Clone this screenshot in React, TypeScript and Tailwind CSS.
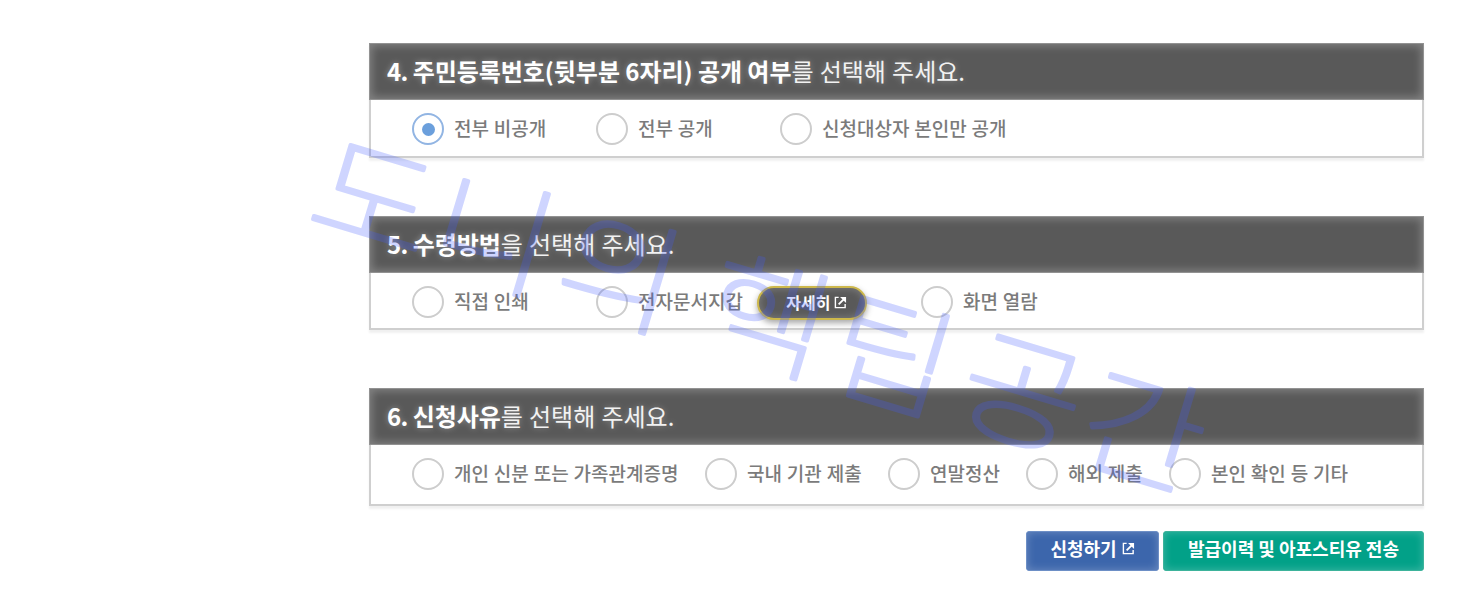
import React from 'react';

type Option = {
  label: string;
  width: string;
  checked?: boolean;
  detail?: boolean;
};

const questions: { no: string; strong: string; rest: string; gap: string; body: string; options: Option[] }[] = [
  {
    no: '4.',
    strong: '주민등록번호(뒷부분 6자리) 공개 여부',
    rest: '를 선택해 주세요.',
    gap: 'mb-[58px]',
    body: 'h-[58px]',
    options: [
      { label: '전부 비공개', width: 'w-[184px]', checked: true },
      { label: '전부 공개', width: 'w-[184px]' },
      { label: '신청대상자 본인만 공개', width: 'w-[240px]' },
    ],
  },
  {
    no: '5.',
    strong: '수령방법',
    rest: '을 선택해 주세요.',
    gap: 'mb-[58px]',
    body: 'h-[57px]',
    options: [
      { label: '직접 인쇄', width: 'w-[184px]' },
      { label: '전자문서지갑', width: 'w-[325px]', detail: true },
      { label: '화면 열람', width: 'w-[140px]' },
    ],
  },
  {
    no: '6.',
    strong: '신청사유',
    rest: '를 선택해 주세요.',
    gap: 'mb-[25px]',
    body: 'h-[61px]',
    options: [
      { label: '개인 신분 또는 가족관계증명', width: 'w-[293px]' },
      { label: '국내 기관 제출', width: 'w-[183px]' },
      { label: '연말정산', width: 'w-[138px]' },
      { label: '해외 제출', width: 'w-[143px]' },
      { label: '본인 확인 등 기타', width: 'w-[190px]' },
    ],
  },
];

const LinkIcon = ({ className }: { className?: string }) => (
  <svg className={className} viewBox="0 0 14 14" fill="none" stroke="currentColor" strokeWidth="1.5">
    <path d="M5 1.5H1.5v11h10.5V8.5" />
    <path d="M5 9L11 3" strokeWidth="2" />
    <path d="M6.5 1h6.5v6.5z" fill="currentColor" stroke="none" />
  </svg>
);

const Radio = ({ checked }: { checked?: boolean }) => (
  <span
    className={`flex h-8 w-8 shrink-0 items-center justify-center rounded-full border-2 bg-white ${
      checked ? 'border-[#92b5e3]' : 'border-[#cdcdcd]'
    }`}
  >
    {checked && <span className="h-[13px] w-[13px] rounded-full bg-[#6b9fdc]" />}
  </span>
);

const Watermark = () => (
  <svg className="pointer-events-none absolute inset-0 h-[600px] w-[1480px]" viewBox="0 0 1480 600">
    <g transform="translate(303.5 223.5) rotate(16.7) scale(1.1 1)" opacity="0.25">
      <text
        x="0 113.5 233.5 373 492 615 730"
        y="0 0 0 0 2 0 2"
        fontSize="121"
        fontWeight="100"
        fill="#425cff"
        stroke="#425cff"
        strokeWidth="3.6"
        strokeLinejoin="round"
      >
        도니의핵팁공간
      </text>
    </g>
  </svg>
);

const App = () => {
  return (
    <div className="relative h-[600px] w-[1480px] overflow-hidden bg-white pt-[43px] pl-[369px] font-['Noto_Sans_CJK_KR',sans-serif]">
      {questions.map((q) => (
        <section key={q.no} className={`w-[1055px] shadow-[0_3px_2px_rgba(0,0,0,0.06)] ${q.gap}`}>
          <h2 className="flex h-[57px] items-center border border-[#929292] bg-[#595959] pb-px pl-[17px] text-2xl whitespace-pre text-[#f2f2f2] shadow-[inset_0_0_9px_2px_rgba(255,255,255,0.25)] [text-shadow:0_0_6px_rgba(255,255,255,0.35)]">
            <b className="font-bold tracking-[-0.6px] text-white">{q.no} </b>
            <b className="font-bold tracking-[-0.05px] text-white">{q.strong}</b>
            <span className="[word-spacing:0.8px]">{q.rest}</span>
          </h2>
          <div className={`flex items-start border-x-2 border-b-2 border-[#cfcfcf] pt-[13px] pl-[41px] ${q.body}`}>
            {q.options.map((option) => (
              <div key={option.label} className={`flex h-8 shrink-0 items-center ${option.width}`}>
                <Radio checked={option.checked} />
                <span className="mb-[3px] ml-[10px] text-[19px] leading-8 font-medium whitespace-nowrap text-[#7b7b7b] [word-spacing:0.6px]">
                  {option.label}
                </span>
                {option.detail && (
                  <button className="mt-[2px] ml-[14px] flex h-[34px] w-[110px] shrink-0 items-center justify-center gap-1 rounded-full border-2 border-[#cdb84c] bg-[#595959] pb-[2px] pl-2.5 text-base font-bold text-white shadow-[0_3px_6px_rgba(0,0,0,0.35),inset_0_0_8px_rgba(255,255,255,0.25)]">
                    자세히
                    <LinkIcon className="h-[13px] w-[13px]" />
                  </button>
                )}
              </div>
            ))}
          </div>
        </section>
      ))}

      <div className="flex w-[1055px] justify-end gap-1">
        <button className="flex h-10 w-[133px] items-center justify-center gap-[5px] rounded-[3px] border border-[#6d8fc6] bg-[#3c66ac] pb-1.5 text-lg font-bold text-white shadow-[inset_0_0_8px_rgba(255,255,255,0.25)]">
          신청하기
          <LinkIcon className="h-[13px] w-[13px]" />
        </button>
        <button className="flex h-10 w-[261px] items-center justify-center rounded-[3px] border border-[#3db39b] bg-[#02a188] pb-1.5 text-lg font-bold text-white shadow-[inset_0_0_8px_rgba(255,255,255,0.25)]">
          발급이력 및 아포스티유 전송
        </button>
      </div>

      <Watermark />
    </div>
  );
};

export default App;
